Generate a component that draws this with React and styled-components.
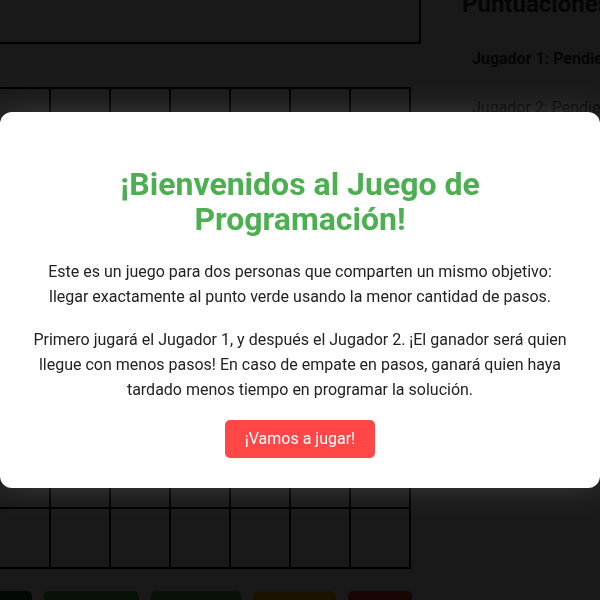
import React from "react";
import styled, { createGlobalStyle } from "styled-components";

const Global = createGlobalStyle`
  html, body { margin: 0; padding: 0; background: #ffffff; overflow: hidden; }
  body { font-family: Roboto, "Liberation Sans", Arial, sans-serif; color: #333; }
  * { box-sizing: border-box; }
`;

const Page = styled.div`
  display: flex;
  align-items: flex-start;
  gap: 41px;
  margin-top: -20px;
  margin-left: -11px;
  width: 700px;
`;

const LeftColumn = styled.div`
  display: flex;
  flex-direction: column;
  width: 432px;
`;

const EditorBox = styled.div`
  height: 64px;
  border: 2px solid #000;
  background: #fafafa;
`;

const Board = styled.div`
  margin-top: 43px;
  display: grid;
  grid-template-columns: repeat(7, 58px);
  grid-auto-rows: 58px;
  gap: 2px;
  padding: 2px;
  background: #000;
  width: max-content;
`;

const Cell = styled.div`
  background: #fff;
`;

const Controls = styled.div`
  margin-top: 22px;
  display: flex;
  gap: 12px;
`;

const ControlButton = styled.button`
  width: ${(p) => p.$w}px;
  height: 40px;
  border: none;
  border-radius: 5px;
  background: ${(p) => p.$bg};
`;

const RightColumn = styled.div`
  display: flex;
  flex-direction: column;
  gap: 9px;
`;

const ScoreTitle = styled.h2`
  margin: 10px 0 12px;
  font-size: 24px;
  line-height: 28px;
  font-weight: 700;
  color: #333;
  white-space: nowrap;
`;

const ScoreRow = styled.div`
  padding: 10px;
  font-size: 16px;
  line-height: 20px;
  font-weight: ${(p) => (p.$active ? 700 : 400)};
  color: #333;
  white-space: nowrap;
`;

const Overlay = styled.div`
  position: fixed;
  inset: 0;
  background: rgba(0, 0, 0, 0.9);
  display: flex;
  align-items: center;
  justify-content: center;
`;

const Modal = styled.div`
  width: 100%;
  max-width: 600px;
  background: #fff;
  border-radius: 12px;
  padding: 30px;
  text-align: center;
  box-shadow: 0 0 30px rgba(255, 255, 255, 0.15);
`;

const Title = styled.h1`
  margin: 25px 0 22px;
  font-size: 32px;
  line-height: 35px;
  font-weight: 700;
  color: #4caf50;
`;

const Text = styled.p`
  margin: 0 0 18px;
  font-size: 16px;
  line-height: 25px;
  color: #222;
`;

const PlayButton = styled.button`
  padding: 10px 20px;
  border: none;
  border-radius: 5px;
  background: #ff4747;
  color: #fff;
  font-family: inherit;
  font-size: 16px;
  line-height: 18px;
  cursor: pointer;
`;

const controls = [
  { id: "run", w: 43, bg: "#1b5e20" },
  { id: "forward", w: 95, bg: "#4caf50" },
  { id: "turn", w: 90, bg: "#4caf50" },
  { id: "undo", w: 83, bg: "#ffc107" },
  { id: "clear", w: 64, bg: "#f44336" },
];

export default function App() {
  const cells = Array.from({ length: 56 });
  return (
    <>
      <Global />
      <Page>
        <LeftColumn>
          <EditorBox />
          <Board>
            {cells.map((_, i) => (
              <Cell key={i} />
            ))}
          </Board>
          <Controls>
            {controls.map((c) => (
              <ControlButton key={c.id} aria-label={c.id} $w={c.w} $bg={c.bg} />
            ))}
          </Controls>
        </LeftColumn>
        <RightColumn>
          <ScoreTitle>Puntuaciones</ScoreTitle>
          <ScoreRow $active>Jugador 1: Pendiente</ScoreRow>
          <ScoreRow>Jugador 2: Pendiente</ScoreRow>
        </RightColumn>
      </Page>
      <Overlay>
        <Modal>
          <Title>¡Bienvenidos al Juego de Programación!</Title>
          <Text>
            Este es un juego para dos personas que comparten un mismo objetivo:
            llegar exactamente al punto verde usando la menor cantidad de pasos.
          </Text>
          <Text>
            Primero jugará el Jugador 1, y después el Jugador 2. ¡El ganador será
            quien llegue con menos pasos! En caso de empate en pasos, ganará quien
            haya tardado menos tiempo en programar la solución.
          </Text>
          <PlayButton>¡Vamos a jugar!</PlayButton>
        </Modal>
      </Overlay>
    </>
  );
}
